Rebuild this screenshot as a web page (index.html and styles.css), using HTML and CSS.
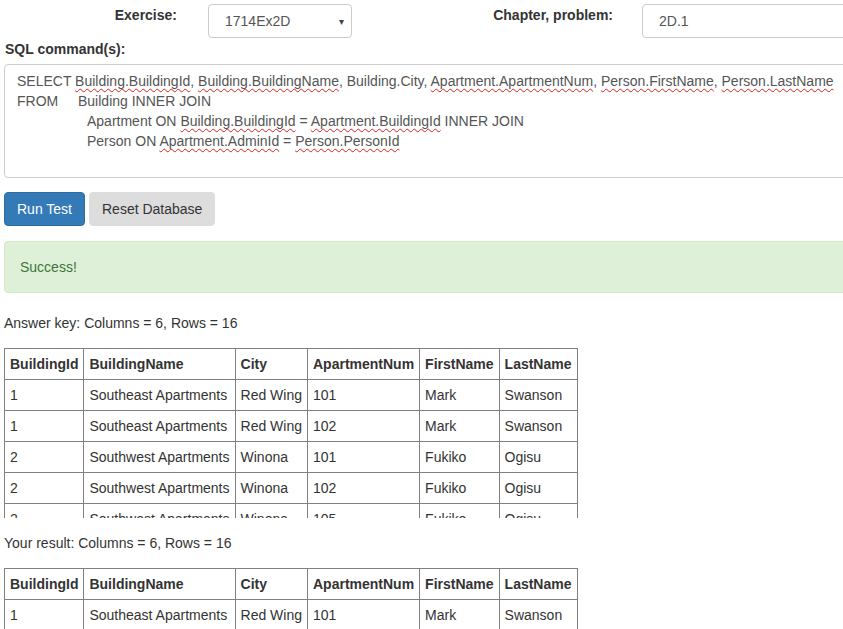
FILE: index.html
```html
<!DOCTYPE html>
<html lang="en">
<head>
<meta charset="utf-8">
<title>SQL Test</title>
<link rel="stylesheet" href="styles.css">
</head>
<body>
<div class="page">
  <div class="top-row">
    <label class="lbl lbl-ex">Exercise:</label>
    <div class="select">
      <span>1714Ex2D</span>
      <span class="caret">&#9662;</span>
    </div>
    <label class="lbl lbl-ch">Chapter, problem:</label>
    <div class="input">2D.1</div>
  </div>

  <label class="lbl lbl-sql">SQL command(s):</label>
  <div class="sql">
    <div class="line">SELECT <span class="sp">Building.BuildingId</span>, <span class="sp">Building.BuildingName</span>, Building.City, <span class="sp">Apartment.ApartmentNum</span>, <span class="sp">Person.FirstName</span>, <span class="sp">Person.LastName</span></div>
    <div class="line"><span class="from">FROM</span>Building INNER JOIN</div>
    <div class="line indent">Apartment ON <span class="sp">Building.BuildingId</span> = <span class="sp">Apartment.BuildingId</span> INNER JOIN</div>
    <div class="line indent">Person ON <span class="sp">Apartment.AdminId</span> = <span class="sp">Person.PersonId</span></div>
    <div class="line">&nbsp;</div>
  </div>

  <div class="buttons">
    <button class="btn btn-primary">Run Test</button>
    <button class="btn btn-default">Reset Database</button>
  </div>

  <div class="alert">Success!</div>

  <p class="caption">Answer key: Columns = 6, Rows = 16</p>
  <div class="scroll">
    <table>
      <thead>
        <tr><th>BuildingId</th><th>BuildingName</th><th>City</th><th>ApartmentNum</th><th>FirstName</th><th>LastName</th></tr>
      </thead>
      <tbody>
        <tr><td>1</td><td>Southeast Apartments</td><td>Red Wing</td><td>101</td><td>Mark</td><td>Swanson</td></tr>
        <tr><td>1</td><td>Southeast Apartments</td><td>Red Wing</td><td>102</td><td>Mark</td><td>Swanson</td></tr>
        <tr><td>2</td><td>Southwest Apartments</td><td>Winona</td><td>101</td><td>Fukiko</td><td>Ogisu</td></tr>
        <tr><td>2</td><td>Southwest Apartments</td><td>Winona</td><td>102</td><td>Fukiko</td><td>Ogisu</td></tr>
        <tr><td>2</td><td>Southwest Apartments</td><td>Winona</td><td>105</td><td>Fukiko</td><td>Ogisu</td></tr>
        <tr><td>2</td><td>Southwest Apartments</td><td>Winona</td><td>106</td><td>Fukiko</td><td>Ogisu</td></tr>
      </tbody>
    </table>
  </div>

  <p class="caption">Your result: Columns = 6, Rows = 16</p>
  <div class="scroll">
    <table>
      <thead>
        <tr><th>BuildingId</th><th>BuildingName</th><th>City</th><th>ApartmentNum</th><th>FirstName</th><th>LastName</th></tr>
      </thead>
      <tbody>
        <tr><td>1</td><td>Southeast Apartments</td><td>Red Wing</td><td>101</td><td>Mark</td><td>Swanson</td></tr>
        <tr><td>1</td><td>Southeast Apartments</td><td>Red Wing</td><td>102</td><td>Mark</td><td>Swanson</td></tr>
        <tr><td>2</td><td>Southwest Apartments</td><td>Winona</td><td>101</td><td>Fukiko</td><td>Ogisu</td></tr>
        <tr><td>2</td><td>Southwest Apartments</td><td>Winona</td><td>102</td><td>Fukiko</td><td>Ogisu</td></tr>
      </tbody>
    </table>
  </div>
</div>
</body>
</html>
```

FILE: styles.css
```css
html, body {
  margin: 0;
  padding: 0;
  overflow: hidden;
  background: #fff;
}
body {
  font-family: "Liberation Sans", Arial, Helvetica, sans-serif;
  font-size: 14px;
  line-height: 20px;
  color: #333;
}
.page {
  width: 1100px;
  padding-left: 4px;
}
.top-row {
  display: flex;
  align-items: flex-start;
  padding-top: 4px;
}
.lbl {
  font-weight: bold;
  display: block;
}
.lbl-ex {
  width: 173px;
  text-align: right;
  margin-top: 1px;
  margin-right: 31px;
}
.select {
  box-sizing: border-box;
  width: 144px;
  height: 34px;
  border: 1px solid #ccc;
  border-radius: 4px;
  padding: 6px 7px 6px 16px;
  color: #555;
  display: flex;
  justify-content: space-between;
  align-items: center;
}
.caret {
  font-size: 10px;
  color: #444;
  line-height: 10px;
  padding-top: 2px;
}
.lbl-ch {
  width: 261px;
  text-align: right;
  margin-top: 1px;
  margin-right: 29px;
}
.input {
  box-sizing: border-box;
  width: 400px;
  height: 34px;
  border: 1px solid #ccc;
  border-radius: 4px;
  padding: 6px 16px;
  color: #555;
}
.lbl-sql {
  margin-top: 1px;
  margin-left: 1px;
  margin-bottom: 5px;
}
.sql {
  box-sizing: border-box;
  height: 114px;
  border: 1px solid #ccc;
  border-radius: 4px;
  padding: 6px 12px;
  color: #555;
  white-space: nowrap;
}
.line {
  height: 20px;
}
.from {
  display: inline-block;
  width: 61px;
}
.indent {
  padding-left: 70px;
}
.sp {
  text-decoration: underline wavy #e02020;
  text-decoration-thickness: 1px;
  text-underline-offset: 2px;
  text-decoration-skip-ink: none;
}
.buttons {
  display: flex;
  gap: 4px;
  margin-top: 14px;
}
.btn {
  font-family: inherit;
  font-size: 14px;
  line-height: 20px;
  padding: 6px 12px;
  border-radius: 4px;
  border: 1px solid transparent;
  cursor: pointer;
}
.btn-primary {
  background: #337ab7;
  border-color: #2e6da4;
  color: #fff;
}
.btn-default {
  background: #ddd;
  border-color: #ddd;
  color: #333;
}
.alert {
  margin-top: 15px;
  margin-bottom: 20px;
  padding: 15px;
  background: #dff0d8;
  border: 1px solid #d6e9c6;
  border-radius: 4px;
  color: #3c763d;
}
.caption {
  margin: 0 0 15px 0;
}
.scroll {
  max-height: 170px;
  overflow-y: auto;
  scrollbar-width: none;
  margin-bottom: 15px;
}
table {
  border-collapse: collapse;
}
th, td {
  border: 1px solid #808080;
  padding: 5px;
  text-align: left;
  white-space: nowrap;
}
th {
  font-weight: bold;
}
```
